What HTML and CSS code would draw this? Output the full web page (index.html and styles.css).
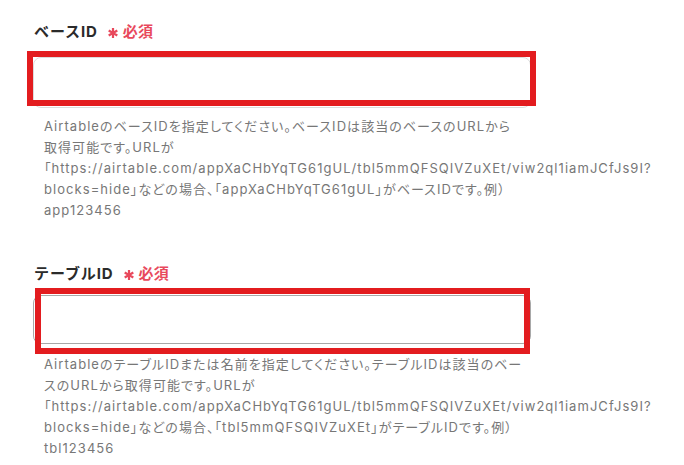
FILE: index.html
```html
<!DOCTYPE html>
<html lang="ja">
<head>
<meta charset="utf-8">
<link rel="stylesheet" href="styles.css">
</head>
<body>
<main class="form">
  <section class="field field-base">
    <div class="label"><span class="label-text">ベースID</span><span class="req"><svg class="ast" viewBox="0 0 10 10" width="10" height="10"><path d="M5 0V10M0.7 2.5L9.3 7.5M0.7 7.5L9.3 2.5"/></svg><span>必須</span></span></div>
    <div class="input-wrap">
      <div class="input input-light"></div>
      <div class="highlight hl-1"></div>
    </div>
    <p class="help">AirtableのベースIDを指定してください。ベースIDは該当のベースのURLから<br>取得可能です。URLが<br>「https://airtable.com/appXaCHbYqTG61gUL/tbl5mmQFSQIVZuXEt/viw2ql1iamJCfJs9I?<br>blocks=hide」などの場合、「appXaCHbYqTG61gUL」がベースIDです。例）<br>app123456</p>
  </section>
  <section class="field field-table">
    <div class="label"><span class="label-text">テーブルID</span><span class="req"><svg class="ast" viewBox="0 0 10 10" width="10" height="10"><path d="M5 0V10M0.7 2.5L9.3 7.5M0.7 7.5L9.3 2.5"/></svg><span>必須</span></span></div>
    <div class="input-wrap">
      <div class="input input-dark"></div>
      <div class="highlight hl-2"></div>
    </div>
    <p class="help">AirtableのテーブルIDまたは名前を指定してください。テーブルIDは該当のベー<br>スのURLから取得可能です。URLが<br>「https://airtable.com/appXaCHbYqTG61gUL/tbl5mmQFSQIVZuXEt/viw2ql1iamJCfJs9I?<br>blocks=hide」などの場合、「tbl5mmQFSQIVZuXEt」がテーブルIDです。例）<br>tbl123456</p>
  </section>
</main>
</body>
</html>
```
FILE: styles.css
```css
html, body {
  margin: 0;
  padding: 0;
  background: #ffffff;
}
body {
  font-family: Inter, "Noto Sans CJK JP", sans-serif;
  color: #333;
}
.form {
  padding: 19px 0 0 33px;
  width: 640px;
}
.field {
  display: flex;
  flex-direction: column;
}
.field-table {
  margin-top: 40px;
}
.label {
  display: flex;
  align-items: center;
  height: 22px;
  font-size: 15px;
  font-weight: 700;
  color: #2b2b2b;
  padding-left: 1px;
  letter-spacing: 0.9px;
}
.req {
  display: flex;
  align-items: center;
  gap: 5px;
  margin-left: 10px;
  color: #e8495c;
  font-size: 15px;
  font-weight: 700;
  letter-spacing: 0.3px;
}
.ast {
  display: block;
  flex: none;
  position: relative;
  top: 3px;
  stroke: #e8495c;
  stroke-width: 2.2;
  fill: none;
}
.input-wrap {
  position: relative;
  width: 498px;
}
.field-base .input-wrap {
  margin-top: 16px;
}
.field-table .input-wrap {
  margin-top: 12px;
}
.input {
  box-sizing: border-box;
  background: #fff;
  border-radius: 8px;
}
.input-light {
  height: 51px;
  border: 1px solid #dcdcdc;
}
.input-dark {
  height: 49px;
  border: 1px solid #a8a8a8;
}
.highlight {
  position: absolute;
  box-sizing: border-box;
  border: 6px solid #e31c1f;
}
.hl-1 {
  left: -6px;
  top: -6px;
  width: 509px;
  height: 55px;
}
.hl-2 {
  left: 2px;
  top: -7px;
  width: 495px;
  height: 66px;
}
.help {
  margin: 8px 0 0 11px;
  font-size: 13px;
  line-height: 21px;
  color: #777777;
  white-space: nowrap;
  letter-spacing: 1.05px;
  font-feature-settings: "palt";
}
.field-table .help {
  margin-top: 10px;
}
```
